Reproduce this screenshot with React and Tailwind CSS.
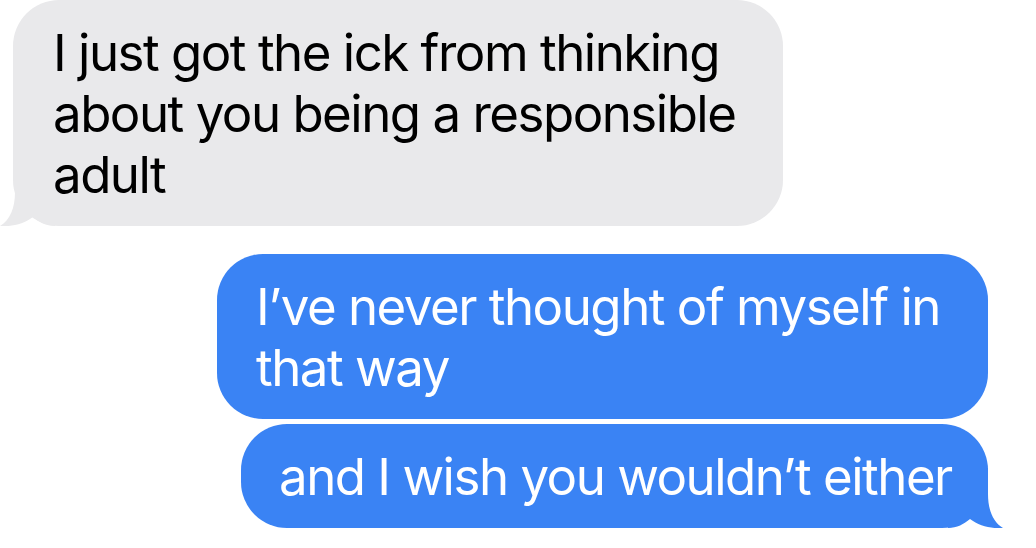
import React from 'react';

function Tail({ side, color }) {
    // tail drawn over the bubble's bottom corner
    const isRight = side === 'right';
    return (
        <svg
            width="55"
            height="60"
            viewBox="0 0 55 60"
            className={isRight ? "absolute bottom-0 right-[-15px]" : "absolute bottom-0 left-[-13px] -scale-x-100"}
        >
            <path
                d="M0 0 H40 V26 C40 42 45 54 55 60 C44 61 31 58 22 51 C16 56 9 60 0 60 Z"
                fill={color}
            />
        </svg>
    );
}

function Bubble({ from, tail, className, children }) {
    const mine = from === 'me';
    const color = mine ? '#3a83f4' : '#e9e9eb';
    return (
        <div
            className={
                "relative rounded-[46px] py-[21.5px] whitespace-nowrap text-[51px] leading-[61px] " +
                (mine ? "bg-[#3a83f4] text-white " : "bg-[#e9e9eb] text-black ") +
                className
            }
        >
            {tail && <Tail side={mine ? 'right' : 'left'} color={color} />}
            <span className="relative">{children}</span>
        </div>
    );
}

export default function App() {
    return (
        <div className="w-[1036px] h-[548px] bg-white overflow-hidden flex flex-col font-['Inter','Liberation_Sans',sans-serif] tracking-[-1.5px]">
            {/* Incoming */}
            <div className="pl-[13px]">
                <Bubble from="them" tail className="w-[770px] pl-[40px]">
                    I just got the ick from thinking<br />
                    about you being a responsible<br />
                    adult
                </Bubble>
            </div>

            {/* Outgoing */}
            <div className="flex flex-col items-end pr-[48px] mt-[28px] gap-[5px]">
                <Bubble from="me" className="w-[771px] pl-[39px]">
                    I’ve never thought of myself in<br />
                    that way
                </Bubble>
                <Bubble from="me" tail className="w-[747px] pl-[38px]">
                    and I wish you wouldn’t either
                </Bubble>
            </div>
        </div>
    );
}
